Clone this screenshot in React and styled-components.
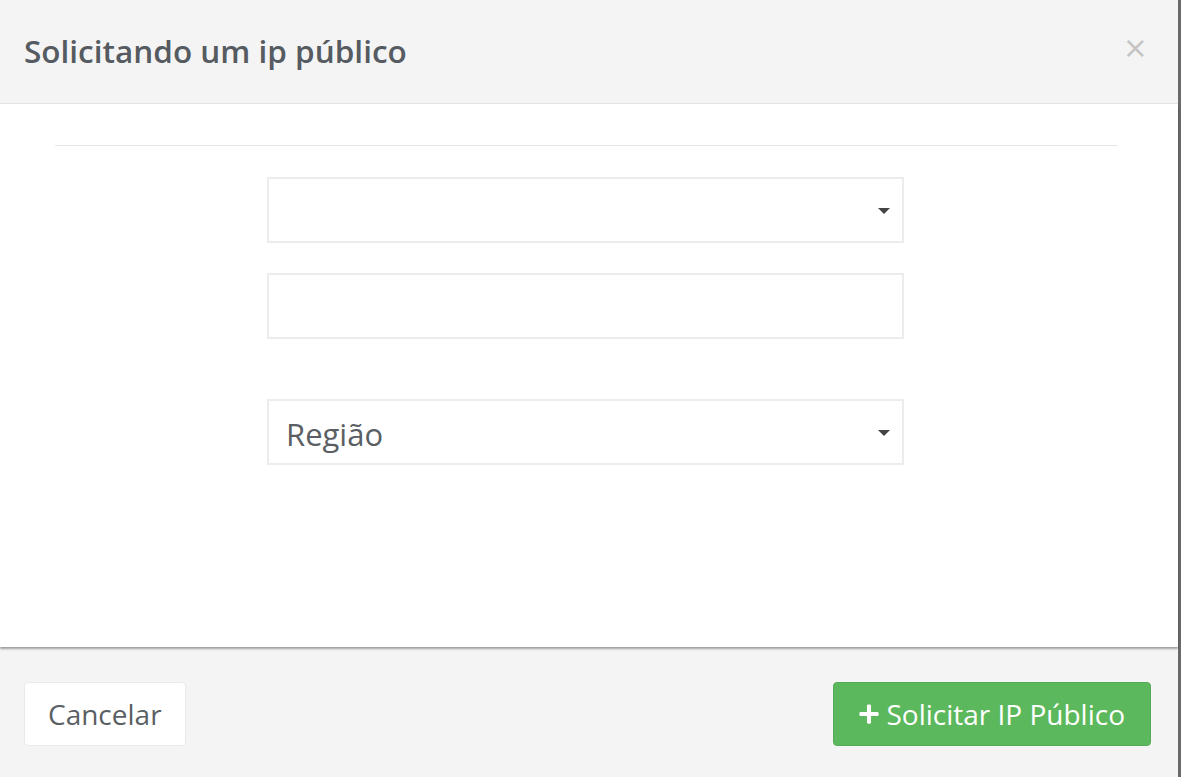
import React from "react";
import styled, { createGlobalStyle } from "styled-components";
import { FaPlus } from "react-icons/fa";

const Global = createGlobalStyle`
    body {
        margin: 0;
        background: #ffffff;
        font-family: "Open Sans", "Liberation Sans", sans-serif;
    }
`;

const Modal = styled.div`
    width: 1178px;
    height: 777px;
    display: flex;
    flex-direction: column;
    border-right: 3px solid #6a6a6a;
    background: #f4f4f4;
`;

const Header = styled.div`
    height: 104px;
    flex-shrink: 0;
    display: flex;
    align-items: center;
    justify-content: space-between;
    padding: 0 30px 2px 24px;
    box-sizing: border-box;
    background: #f4f4f4;
    border-bottom: 1px solid #e3e3e3;
`;

const Title = styled.h4`
    margin: 0;
    font-size: 31.5px;
    font-weight: 600;
    color: #555b61;
`;

const Close = styled.span`
    font-family: "DejaVu Sans", sans-serif;
    font-size: 30px;
    color: #c4c4c4;
    line-height: 1;
    margin-bottom: 6px;
`;

const Body = styled.div`
    height: 543px;
    flex-shrink: 0;
    background: #ffffff;
    padding: 41px 60px 0 55px;
    box-sizing: border-box;
    box-shadow: 0 2px 2px rgba(0, 0, 0, 0.35);
    position: relative;
`;

const Rule = styled.div`
    height: 1px;
    background: #e6e6e6;
`;

const Fields = styled.div`
    margin-left: 212px;
    width: 637px;
    display: flex;
    flex-direction: column;
    padding-top: 31px;
`;

const Field = styled.div`
    height: 66px;
    box-sizing: border-box;
    border: 2px solid #ececec;
    display: flex;
    align-items: center;
    justify-content: space-between;
    padding: 4px 12px 0 17px;
    margin-top: ${(p) => p.gap || 0}px;
    font-size: 31px;
    color: #5a5f64;
`;

const Caret = styled.span`
    width: 0;
    height: 0;
    border-left: 6px solid transparent;
    border-right: 6px solid transparent;
    border-top: 6px solid #444;
    margin-bottom: 2px;
`;

const Footer = styled.div`
    flex: 1;
    display: flex;
    justify-content: space-between;
    align-items: flex-start;
    padding: 32px 27px 0 24px;
    margin-top: 3px;
`;

const Button = styled.button`
    height: 64px;
    border-radius: 4px;
    font-family: "Open Sans", "Liberation Sans", sans-serif;
    font-size: 28px;
    display: flex;
    align-items: center;
    gap: 6px;
    cursor: pointer;
    padding: 0 ${(p) => (p.primary ? 25 : 23)}px 0 ${(p) => (p.primary ? 24 : 23)}px;
    background: ${(p) => (p.primary ? "#5cb85c" : "#ffffff")};
    color: ${(p) => (p.primary ? "#ffffff" : "#5a5f64")};
    border: 1px solid ${(p) => (p.primary ? "#54ad54" : "#eaeaea")};
`;

const App = () => {
    return (
        <Modal>
            <Global />
            <Header>
                <Title>Solicitando um ip público</Title>
                <Close>×</Close>
            </Header>
            <Body>
                <Rule />
                <Fields>
                    <Field>
                        <span />
                        <Caret />
                    </Field>
                    <Field gap={30} />
                    <Field gap={60}>
                        <span>Região</span>
                        <Caret />
                    </Field>
                </Fields>
            </Body>
            <Footer>
                <Button>Cancelar</Button>
                <Button primary>
                    <FaPlus size={22} />
                    Solicitar IP Público
                </Button>
            </Footer>
        </Modal>
    );
};

export default App;
